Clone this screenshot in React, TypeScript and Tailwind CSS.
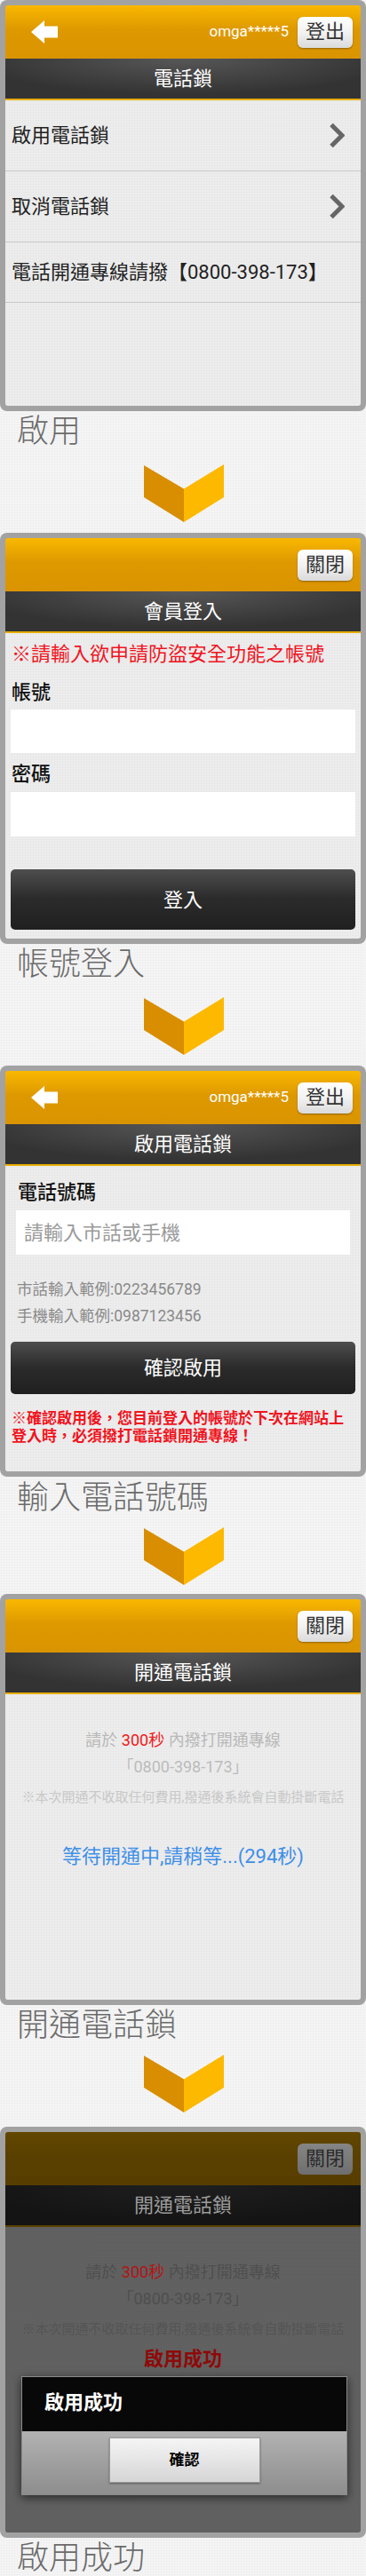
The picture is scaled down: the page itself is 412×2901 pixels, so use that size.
import clsx from "clsx";
import type { ReactNode } from "react";

const font = "font-['Roboto','Noto_Sans_CJK_TC',sans-serif]";

function BackArrow() {
  return (
    <svg width="30" height="26" viewBox="0 0 30 26">
      <path d="M0 13 L15 0 V6.5 H30 V19.5 H15 V26 Z" fill="#fff" />
    </svg>
  );
}

function Chevron() {
  return (
    <svg width="18" height="29" viewBox="0 0 18 29">
      <polyline points="3,2.5 15,14.5 3,26.5" fill="none" stroke="#666" strokeWidth="5" />
    </svg>
  );
}

function DownArrow() {
  return (
    <svg width="90" height="65" viewBox="0 0 90 65">
      <polygon points="0,1 45,27.5 45,65 0,37" fill="#d88e00" />
      <polygon points="45,27.5 90,0 90,37 45,65" fill="#fcb900" />
    </svg>
  );
}

function Frame({ children }: { children: ReactNode }) {
  return (
    <div className="h-[463px] shrink-0 rounded-[8px] bg-[#a2a2a2] p-[6px]">
      <div className="relative flex h-full flex-col overflow-hidden rounded-[3px]">{children}</div>
    </div>
  );
}

function TopButton({ label, dim }: { label: string; dim?: boolean }) {
  return (
    <div
      className={clsx(
        "flex h-[35px] w-[62px] items-center justify-center rounded-[6px] text-[22px] leading-none",
        dim
          ? "bg-[linear-gradient(#858585,#7a7a7a_50%,#6e6e6e)] text-[#2a2a2a]"
          : "bg-[linear-gradient(#ffffff,#f2f2f2_50%,#dadada)] text-[#333] shadow-[0_1px_2px_rgba(0,0,0,0.35)]",
      )}
    >
      {label}
    </div>
  );
}

function Header({ user, dim }: { user?: boolean; dim?: boolean }) {
  return (
    <div
      className={clsx(
        "flex h-[60px] shrink-0 items-center pr-[9px]",
        dim
          ? "bg-[linear-gradient(#624700,#5a4000_45%,#573e00)]"
          : "bg-[linear-gradient(#f9b800,#de9900_45%,#da9400)]",
      )}
    >
      {user && (
        <div className="pl-[29px]">
          <BackArrow />
        </div>
      )}
      <div className="flex-1" />
      {user && <span className="mr-[10px] text-[17px] text-white">omga*****5</span>}
      <TopButton label={user ? "登出" : "關閉"} dim={dim} />
    </div>
  );
}

function TitleBar({ title, dim }: { title: string; dim?: boolean }) {
  return (
    <div
      className={clsx(
        "flex h-[47px] shrink-0 items-center justify-center border-b-2 text-[22px]",
        dim
          ? "border-[#5a4300] bg-[radial-gradient(ellipse_60%_90%_at_50%_0%,#1f1f1f,#141414)] text-[#9c9c9c]"
          : "border-[#e6ad00] bg-[radial-gradient(ellipse_60%_90%_at_50%_0%,#575757,#333333)] text-white",
      )}
    >
      {title}
    </div>
  );
}

function Body({ children, dim, className }: { children?: ReactNode; dim?: boolean; className?: string }) {
  return (
    <div
      className={clsx(
        "flex-1 bg-[length:3px_3px]",
        dim
          ? "bg-[#616161] bg-[radial-gradient(#5b5b5b_0.8px,transparent_0.8px)]"
          : "bg-[#ececec] bg-[radial-gradient(#e2e2e2_0.8px,transparent_0.8px)]",
        className,
      )}
    >
      {children}
    </div>
  );
}

function Step({ label, className }: { label: string; className?: string }) {
  return (
    <div className={clsx("h-[46px] pl-[19px] text-[36px] font-light leading-[46px] text-[#6b6b6b]", className)}>{label}</div>
  );
}

function Arrow({ className }: { className?: string }) {
  return (
    <div className={clsx("flex justify-center pl-[2px]", className)}>
      <DownArrow />
    </div>
  );
}

const darkButton =
  "flex items-center justify-center rounded-[5px] bg-[linear-gradient(#4e4e4e,#2b2b2b_48%,#202020)] text-[22px] text-white";

function MenuScreen() {
  return (
    <Frame>
      <Header user />
      <TitleBar title="電話鎖" />
      <Body>
        <div className="flex h-[80px] items-center justify-between border-b border-[#c9c9c9] pl-[7px] pr-[18px] text-[22px] text-[#222]">
          啟用電話鎖
          <Chevron />
        </div>
        <div className="flex h-[80px] items-center justify-between border-b border-[#c9c9c9] pl-[7px] pr-[18px] text-[22px] text-[#222]">
          取消電話鎖
          <Chevron />
        </div>
        <div className="flex h-[68px] items-center border-b border-[#c9c9c9] pl-[7px] text-[22px] text-[#222]">
          電話開通專線請撥【0800-398-173】
        </div>
      </Body>
    </Frame>
  );
}

function LoginScreen() {
  return (
    <Frame>
      <Header />
      <TitleBar title="會員登入" />
      <Body className="px-[6px] pt-[9px]">
        <p className="pl-[1px] text-[22px] leading-[30px] text-[#f0141e]">※請輸入欲申請防盜安全功能之帳號</p>
        <p className="mt-[13px] pl-[1px] text-[22px] font-medium leading-[30px] text-[#111]">帳號</p>
        <div className="mt-[4px] h-[49px] bg-white" />
        <p className="mt-[9px] pl-[1px] text-[22px] font-medium leading-[30px] text-[#111]">密碼</p>
        <div className="mt-[5px] h-[50px] bg-white" />
        <div className={clsx(darkButton, "mt-[37px] h-[68px]")}>登入</div>
      </Body>
    </Frame>
  );
}

function PhoneScreen() {
  return (
    <Frame>
      <Header user />
      <TitleBar title="啟用電話鎖" />
      <Body className="pt-[15px]">
        <p className="pl-[14px] text-[22px] font-medium leading-[30px] text-[#111]">電話號碼</p>
        <div className="mx-[12px] mt-[5px] flex h-[50px] items-center bg-white pl-[9px] text-[22px] text-[#9a9a9a]">
          請輸入市話或手機
        </div>
        <div className="mt-[24px] pl-[13px] text-[17.5px] leading-[30px] text-[#8a8a8a]">
          <p>市話輸入範例:0223456789</p>
          <p>手機輸入範例:0987123456</p>
        </div>
        <div className={clsx(darkButton, "mx-[6px] mt-[14px] h-[59px]")}>確認啟用</div>
        <p className="mt-[17px] px-[7px] text-[17px] font-bold leading-[20px] text-[#f0141e]">
          ※確認啟用後，您目前登入的帳號於下次在網站上登入時，必須撥打電話鎖開通專線！
        </p>
      </Body>
    </Frame>
  );
}

function CallInfo({ dim }: { dim?: boolean }) {
  return (
    <>
      <p className={clsx("text-[18px] leading-[30px]", dim ? "text-[#4f4f4f]" : "text-[#b8b8b8]")}>
        請於 <span className={dim ? "text-[#b41414]" : "text-[#f01818]"}>300秒</span> 內撥打開通專線
      </p>
      <p className={clsx("text-[18px] leading-[29px]", dim ? "text-[#4f4f4f]" : "text-[#bcbcbc]")}>「0800-398-173」</p>
      <p className={clsx("mt-[5px] text-[15px] leading-[30px]", dim ? "text-[#555]" : "text-[#c8c8c8]")}>
        ※本次開通不收取任何費用,撥通後系統會自動掛斷電話
      </p>
    </>
  );
}

function WaitScreen() {
  return (
    <Frame>
      <Header />
      <TitleBar title="開通電話鎖" />
      <Body className="pt-[37px] text-center">
        <CallInfo />
        <p className="mt-[37px] text-[22px] leading-[30px] text-[#3d8fe8]">等待開通中,請稍等...(294秒)</p>
      </Body>
    </Frame>
  );
}

function DoneScreen() {
  return (
    <Frame>
      <Header dim />
      <TitleBar title="開通電話鎖" dim />
      <Body dim className="pt-[36px] text-center">
        <CallInfo dim />
        <p className="mt-[4px] text-[22px] font-bold leading-[30px] text-[#8e0a0a]">啟用成功</p>
      </Body>
      <div className="absolute left-[18px] top-[275px] w-[367px] border border-[#8a8a8a] shadow-[0_3px_10px_rgba(0,0,0,0.6)]">
        <div className="flex h-[61px] items-center bg-[#080808] pb-[5px] pl-[25px] text-[22px] font-bold text-white">
          啟用成功
        </div>
        <div className="flex h-[71px] justify-center bg-[linear-gradient(#b2b2b2,#8d8d8d)] pt-[7px]">
          <div className="flex h-[51px] w-[170px] items-center justify-center border border-[#9a9a9a] bg-[linear-gradient(#f5f5f5,#d5d5d5)] text-[17px] font-bold text-black shadow-[0_1px_2px_rgba(0,0,0,0.4)]">
            確認
          </div>
        </div>
      </div>
    </Frame>
  );
}

export default function App() {
  return (
    <div
      className={clsx(
        font,
        "flex h-[2901px] w-[412px] flex-col overflow-hidden bg-[#f4f4f4] bg-[radial-gradient(#e8e8e8_0.8px,transparent_0.8px)] bg-[length:3px_3px]",
      )}
    >
      <MenuScreen />
      <Step label="啟用" />
      <Arrow className="mt-[14px] mb-[12px]" />
      <LoginScreen />
      <Step label="帳號登入" />
      <Arrow className="mt-[14px] mb-[12px]" />
      <PhoneScreen />
      <Step label="輸入電話號碼" className="mt-[1px]" />
      <Arrow className="mt-[10px] mb-[10px]" />
      <WaitScreen />
      <Step label="開通電話鎖" className="pl-[17px]" />
      <Arrow className="mt-[10px] mb-[16px]" />
      <DoneScreen />
      <Step label="啟用成功" className="pl-[16px]" />
    </div>
  );
}
